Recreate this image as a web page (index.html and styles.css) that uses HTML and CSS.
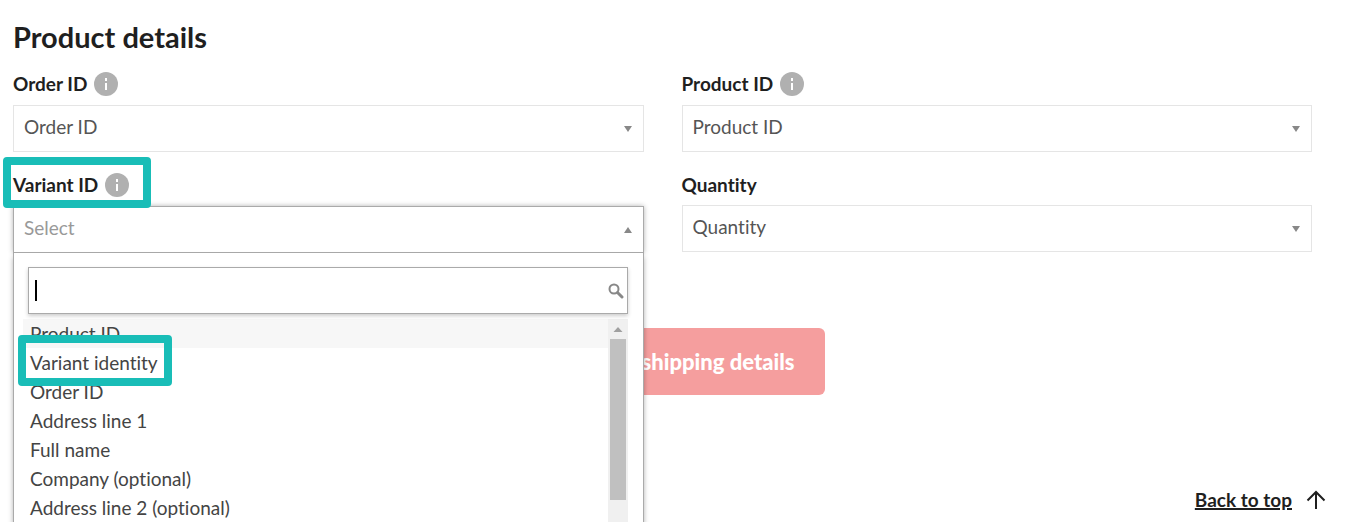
FILE: index.html
```html
<!DOCTYPE html>
<html lang="en">
<head>
    <meta charset="UTF-8">
    <meta name="viewport" content="width=device-width, initial-scale=1.0">
    <title>Product details</title>
    <link rel="stylesheet" href="styles.css">
</head>
<body>
    <main class="page">
        <form class="details-form">
            <h2>Product details</h2>
            <div class="fields">
                <div class="field">
                    <div class="field-label">
                        <label for="orderId">Order ID</label>
                        <svg class="info" viewBox="0 0 24 24" aria-hidden="true"><circle cx="12" cy="12" r="12"/><path d="M11 6h2v3h-2zM11 11h2v7h-2z"/></svg>
                    </div>
                    <select id="orderId"><option>Order ID</option></select>
                </div>
                <div class="field">
                    <div class="field-label">
                        <label for="productId">Product ID</label>
                        <svg class="info" viewBox="0 0 24 24" aria-hidden="true"><circle cx="12" cy="12" r="12"/><path d="M11 6h2v3h-2zM11 11h2v7h-2z"/></svg>
                    </div>
                    <select id="productId"><option>Product ID</option></select>
                </div>
                <div class="field">
                    <div class="field-label marked">
                        <label for="variantId">Variant ID</label>
                        <svg class="info" viewBox="0 0 24 24" aria-hidden="true"><circle cx="12" cy="12" r="12"/><path d="M11 6h2v3h-2zM11 11h2v7h-2z"/></svg>
                    </div>
                    <div class="open-select">
                        <select id="variantId" class="open"><option>Select</option></select>
                        <div class="dropdown">
                            <div class="search">
                                <input type="text" aria-label="Search">
                                <span class="caret"></span>
                                <svg class="search-icon" viewBox="0 0 16 16" aria-hidden="true"><circle cx="6" cy="6" r="4.5"/><path d="M9.5 9.5l4.5 4.5" stroke-width="3"/></svg>
                            </div>
                            <div class="results">
                                <ul>
                                    <li class="active">Product ID</li>
                                    <li><span class="marked">Variant identity</span></li>
                                    <li>Order ID</li>
                                    <li>Address line 1</li>
                                    <li>Full name</li>
                                    <li>Company (optional)</li>
                                    <li>Address line 2 (optional)</li>
                                </ul>
                                <div class="scrollbar">
                                    <svg viewBox="0 0 16 20" aria-hidden="true"><path d="M3.5 13h9L8 8z"/></svg>
                                    <div class="thumb"></div>
                                </div>
                            </div>
                        </div>
                    </div>
                </div>
                <div class="field">
                    <div class="field-label">
                        <label for="quantity">Quantity</label>
                    </div>
                    <select id="quantity"><option>Quantity</option></select>
                </div>
            </div>
            <button type="button" class="submit">shipping details</button>
        </form>
        <footer>
            <a href="#">Back to top</a>
            <svg class="arrow-up" viewBox="0 0 20 20" aria-hidden="true"><path d="M10 19V2M1.5 10.5L10 2l8.5 8.5"/></svg>
        </footer>
    </main>
</body>
</html>
```
FILE: styles.css
```css
* {
    box-sizing: border-box;
}
body {
    margin: 0;
    background-color: #fff;
    color: #1f1f1f;
    font-family: Lato, "Open Sans", sans-serif;
    font-size: 19px;
    font-variant-ligatures: none;
}
.page {
    display: flex;
    flex-direction: column;
    height: 100vh;
    overflow: hidden;
}
.details-form {
    display: flex;
    flex-direction: column;
    padding: 20px 37px 0 13px;
}
h2 {
    margin: 0 0 18px;
    font-size: 29px;
    line-height: 34px;
}
.fields {
    display: grid;
    grid-template-columns: 1fr 1fr;
    gap: 21px 38px;
    align-items: start;
}
.field-label {
    display: flex;
    align-items: flex-start;
    gap: 7px;
    width: fit-content;
    margin-bottom: 9px;
    font-weight: bold;
    line-height: 23px;
}
.info {
    width: 24px;
    height: 24px;
    fill: #b0b0b0;
}
.info path {
    fill: #fff;
}
select {
    display: block;
    width: 100%;
    height: 47px;
    padding: 0 10px 4px;
    appearance: none;
    border: 1px solid #e5e5e5;
    border-radius: 0;
    background: #fff url("data:image/svg+xml,%3Csvg xmlns='http://www.w3.org/2000/svg' width='8' height='6'%3E%3Cpath d='M0 0h8L4 6z' fill='%23888'/%3E%3C/svg%3E") no-repeat right 11px center;
    color: #555;
    font: inherit;
    font-variant-ligatures: none;
}
select.open {
    border-color: #aaa;
    background-image: url("data:image/svg+xml,%3Csvg xmlns='http://www.w3.org/2000/svg' width='8' height='6'%3E%3Cpath d='M0 6h8L4 0z' fill='%23888'/%3E%3C/svg%3E");
    color: #999;
}
.open-select {
    position: relative;
    box-shadow: 0 0 5px rgba(0, 0, 0, 0.3);
}

/* Dropdown */
.dropdown {
    position: absolute;
    top: 100%;
    left: 0;
    right: 0;
    z-index: 1;
    padding: 14px 15px 0 9px;
    border: 1px solid #aaa;
    border-top: none;
    background-color: #fff;
    box-shadow: 0 4px 5px rgba(0, 0, 0, 0.3);
}
.search {
    position: relative;
    margin: 0 0 5px 5px;
}
.search input {
    display: block;
    width: 100%;
    height: 47px;
    padding: 0 28px 0 8px;
    border: 1px solid #aaa;
    background-color: #fff;
    box-shadow: 0 2px 4px rgba(0, 0, 0, 0.2);
    font: inherit;
    outline: none;
}
.caret {
    position: absolute;
    top: 13px;
    left: 7px;
    width: 2px;
    height: 21px;
    background-color: #000;
}
.search-icon {
    position: absolute;
    top: 16px;
    right: 4px;
    width: 16px;
    height: 16px;
    fill: none;
    stroke: #888;
    stroke-width: 2;
    stroke-linecap: round;
}
.results {
    display: flex;
}
.results ul {
    flex: 1;
    margin: 0;
    padding: 0;
    list-style: none;
    color: #444;
}
.results li {
    padding-left: 7px;
    line-height: 29px;
}
.results li.active {
    background-color: #f7f7f7;
}
.scrollbar {
    width: 20px;
    padding: 0 2px;
    background-color: #f0f0f0;
}
.scrollbar svg {
    display: block;
    width: 16px;
    height: 20px;
    fill: #a0a0a0;
}
.thumb {
    height: 161px;
    background-color: #c0c0c0;
}

/* Highlight boxes */
.marked {
    position: relative;
}
.marked::after {
    content: "";
    position: absolute;
    inset: -16px -22px -11px -10px;
    z-index: 2;
    border: 8px solid #19bdb7;
    border-radius: 4px;
}
.results .marked::after {
    inset: -16px -14px -12px -12px;
}

.submit {
    align-self: center;
    width: 324px;
    height: 67px;
    margin-top: 75px;
    padding: 0 30px;
    border: none;
    border-radius: 6px;
    background-color: #f59e9e;
    color: #fff;
    font: 900 22px Lato, "Open Sans", sans-serif;
    text-align: right;
}
footer {
    display: flex;
    justify-content: flex-end;
    align-items: center;
    gap: 14px;
    margin-top: auto;
    padding: 0 23px 11px 0;
}
footer a {
    color: #1f1f1f;
    font-weight: bold;
    text-decoration-thickness: 2px;
}
.arrow-up {
    width: 20px;
    height: 20px;
    fill: none;
    stroke: #1f1f1f;
    stroke-width: 2;
}
```
